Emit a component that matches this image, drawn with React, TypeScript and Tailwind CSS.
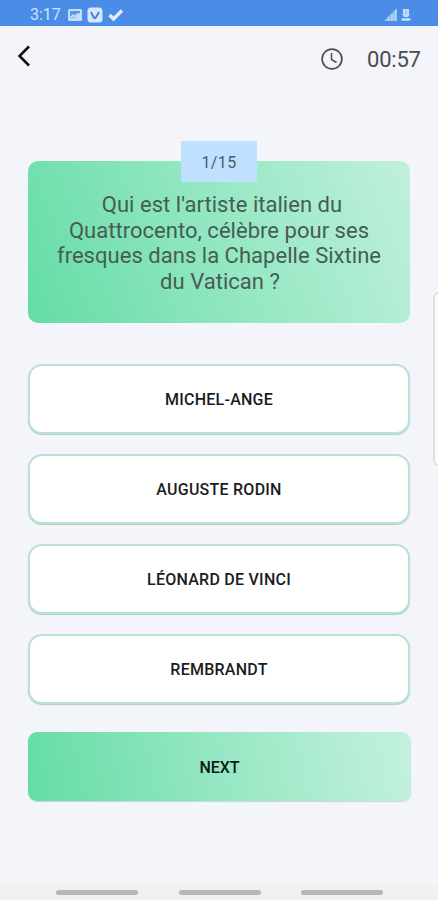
const answers = ['MICHEL-ANGE', 'AUGUSTE RODIN', 'LÉONARD DE VINCI', 'REMBRANDT'];

function StatusBar() {
  return (
    <div className="flex h-[26px] items-center bg-[#4a8ce6] pr-[27px] pl-[30px] pt-[3px] text-[#cfe3fb]">
      <span className="w-[31px] text-[16px] leading-none whitespace-nowrap">3:17</span>
      <svg className="ml-[7px]" width="14" height="12" viewBox="0 0 14 12">
        <rect width="14" height="12" rx="1.5" fill="#c5defa" />
        <path d="M2 2h10v2.500L9.500 4 7 6.500 5 5 2 8z" fill="#5d98e8" />
        <path d="M2.500 10l2.500-2 1.500 1 1.500-1" fill="none" stroke="#8bb6ef" />
      </svg>
      <svg className="ml-[5px]" width="16" height="16" viewBox="0 0 16 16">
        <rect x="0.500" y="0.500" width="15" height="15" rx="3.500" fill="#d6e8fc" />
        <path d="M4 5l3 6h1.500L12 5" fill="none" stroke="#4384dd" strokeWidth="2" />
      </svg>
      <svg className="ml-[5px]" width="16" height="12" viewBox="0 0 16 12">
        <path d="M1.500 6l4 4 8.500-8.500" fill="none" stroke="#e0edfd" strokeWidth="3.400" />
      </svg>
      <svg className="ml-auto" width="13" height="13" viewBox="0 0 13 13">
        <path d="M0 13L13 0v13z" fill="#8fc1ef" />
        <path d="M4.500 9v4M8 6v7M11.500 2v11" stroke="#b5dcf3" strokeWidth="1.500" />
      </svg>
      <svg className="ml-[4px]" width="10" height="13" viewBox="0 0 10 13">
        <path d="M2 1h6v5h1L7 9H3L1 6h1z" fill="#bddcf9" />
        <path d="M0.500 11.500h9" stroke="#c5e0fa" strokeWidth="2.500" />
        <path d="M5 3v3" stroke="#8cbaf1" strokeWidth="1.500" />
      </svg>
    </div>
  );
}

export default function App() {
  return (
    <div className="relative flex h-[900px] w-[438px] flex-col overflow-hidden bg-[#f3f5fa] font-[Roboto,sans-serif]">
      <StatusBar />
      <header className="flex h-[66px] items-center pr-[17px] pl-[17px]">
        <svg className="mb-[6px]" width="14" height="22" viewBox="0 0 14 22">
          <path d="M12 1.500L2.500 11l9.500 9.500" fill="none" stroke="#101114" strokeWidth="2.500" />
        </svg>
        <svg className="ml-auto" width="22" height="22" viewBox="0 0 22 22" fill="none" stroke="#4c4e52">
          <circle cx="11" cy="11" r="9.900" strokeWidth="1.700" />
          <path d="M10.500 5v6.500l5 3" strokeWidth="1.500" />
        </svg>
        <span className="mt-[2px] ml-[24px] w-[54px] text-[22px] leading-none tracking-[-0.200px] whitespace-nowrap text-[#4a4c50]">00:57</span>
      </header>

      <main className="mt-[69px] mr-[28px] ml-[28px] flex flex-col">
        <section className="relative h-[162px] rounded-[10px] bg-[linear-gradient(68deg,#64dca6_0%,#93e7c2_50%,#c0f0dc_100%)] pt-[31.300px]">
          <div className="absolute -top-[20px] left-[153px] flex h-[41px] w-[76px] items-center justify-center bg-[#bfe0fe] pt-[2px] text-[16px] tracking-[0.400px] text-[#505966]">
            1/15
          </div>
          <p className="text-center text-[22px] leading-[25.600px] tracking-[0.030px] text-[#465d54]">
            <span className="pl-[6px]">Qui est l'artiste italien du</span>
            <br />
            Quattrocento, célèbre pour ses
            <br />
            fresques dans la Chapelle Sixtine
            <br />
            <span className="pl-[2px]">du Vatican ?</span>
          </p>
        </section>

        <div className="mt-[41px] flex flex-col gap-[20px]">
          {answers.map((answer) => (
            <button
              key={answer}
              className="h-[70px] rounded-[14px] border-2 border-[#b8e2d3] bg-white pt-[2px] text-[16px] font-medium tracking-[0.250px] text-[#1c1c1c] shadow-[0_1px_1px_#b5cdc5]"
            >
              {answer}
            </button>
          ))}
        </div>

        <button className="mt-[28px] -mr-px h-[69px] rounded-[9px] bg-[linear-gradient(78deg,#64dca6_0%,#96e7c3_50%,#c4f1de_100%)] pt-[2px] text-[16px] font-medium text-[#0e1b15] shadow-[0_1px_1px_#c5d8d0]">
          NEXT
        </button>
      </main>

      <nav className="mt-auto flex h-[15px] items-start justify-between bg-[#f1f1f2] pt-[5px] pr-[55px] pl-[56px]">
        <span className="h-[5px] w-[82px] rounded-full bg-[#b7b7b7]" />
        <span className="h-[5px] w-[82px] rounded-full bg-[#b7b7b7]" />
        <span className="h-[5px] w-[82px] rounded-full bg-[#b7b7b7]" />
      </nav>

      <div className="absolute top-[292px] -right-[10px] h-[174px] w-[15px] rounded-[6px] border-2 border-[#dedfe2] bg-[#fafbfd]" />
    </div>
  );
}
